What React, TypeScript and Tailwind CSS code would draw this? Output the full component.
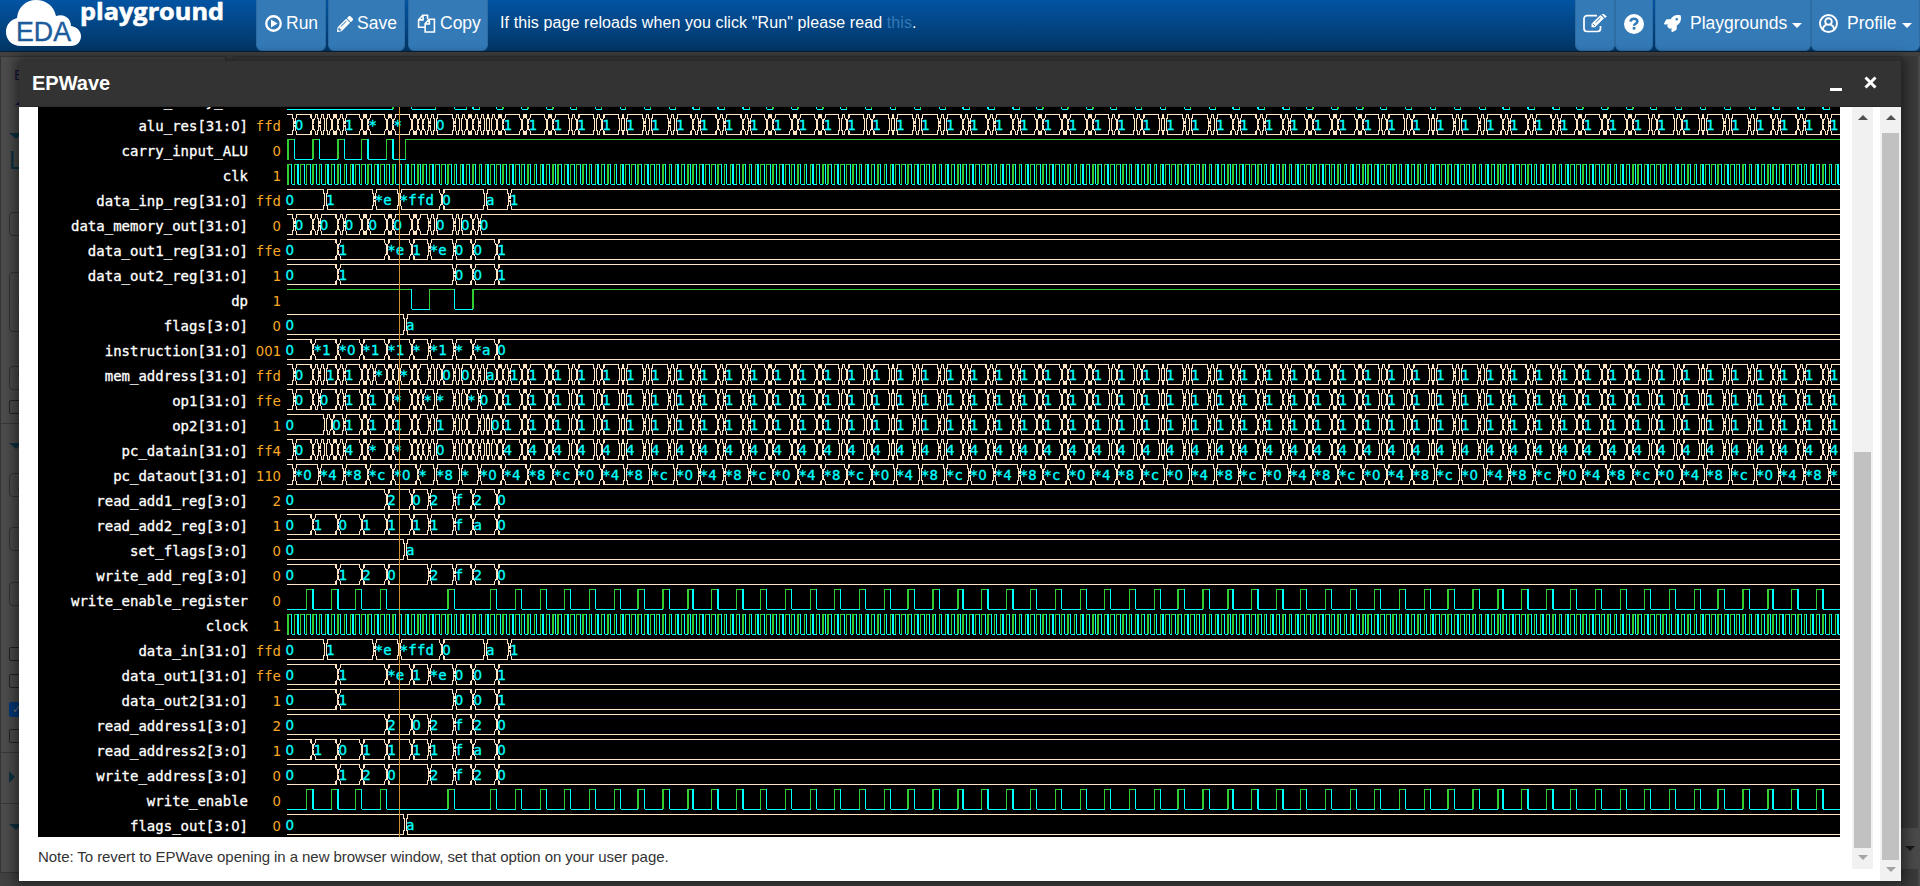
import React from "react";
import { FaPencilAlt, FaRocket } from "react-icons/fa";

type Wave = { name: string; value: string } & (
  | { kind: "bus"; cells: [number, string][] }
  | { kind: "bit"; start: 0 | 1; flips: number[]; edge?: boolean }
);

const STEP = 54 / 11;
const END = 252.9;
const RIGHT = 1840 - 287;
const TOP_Y = 7;

/* Horizontal position of a time step, on the 1.25px raster of the viewer. */
const pos = (k: number) => 0.3 + 1.25 * Math.ceil(k * STEP - 0.001);

const parse = (text: string): [number, string][] =>
  text.split(" ").map((part) => {
    const [k, v] = part.split("=");
    return [Number(k), v ?? ""];
  });

const cycle = (from: number, label: string): [number, string][] => {
  const out: [number, string][] = [];
  for (let k = from; k < END; k += 4) out.push([k, ""], [k + 1, label]);
  return out;
};

const bus = (name: string, value: string, text: string, tail: [number, string][] = []): Wave => ({
  name,
  value,
  kind: "bus",
  cells: [...parse(text), ...tail],
});

const clockFlips: number[] = [];
for (let k = 0.5; k < END + 1; k += 0.5) clockFlips.push(k);

const enableFlips = [3, 4, 7, 8, 11, 12, 15, 16, 26, 27];
for (let k = 33; k < END + 1; k += 4) enableFlips.push(k, k + 1);

const topFlips = [17, 20, 24, 27, 29, 30, 31];
for (let k = 34; k < END; k += 4) topFlips.push(k, k + 1);

const pcTail: [number, string][] = [];
for (let k = 35, i = 1; k < END; k += 4, i++) pcTail.push([k, k > 250 ? "*" : ["*0", "*4", "*8", "*c"][i % 4]]);

const OUT1 = "0=0 8=1 16=*e 20=1 23=*e 27=0 30=0 34=1";
const OUT2 = "0=0 8=1 27=0 30=0 34=1";
const DATA_IN = "0=0 6=1 14=*e 18=*ffd 25=0 32=a 36=1";
const ADDR1 = "0=0 16=2 20=0 23=2 27=f 30=2 34=0";
const ADDR2 = "0=0 4=1 8=0 12=1 16=1 20=1 23=1 27=f 30=a 34=0";
const WADDR = "0=0 8=1 12=2 16=0 23=2 27=f 30=2 34=0";

const waves: Wave[] = [
  { name: "alu_carry_ALU", value: "", kind: "bit", start: 0, flips: topFlips },
  bus("alu_res[31:0]", "ffd", "0 1=0 4 5 6 7 8 9=1 12 13=* 16 17=* 20 21 22 23 24=0 27 28 29 30 31 32 33 34 35=1", cycle(38, "1")),
  { name: "carry_input_ALU", value: "0", kind: "bit", start: 1, edge: true, flips: [1, 4, 5, 8, 9, 12, 13, 16, 17, 19] },
  { name: "clk", value: "1", kind: "bit", start: 1, edge: true, flips: clockFlips },
  bus("data_inp_reg[31:0]", "ffd", DATA_IN),
  bus("data_memory_out[31:0]", "0", "0 1=0 4 5=0 8 9=0 12 13=0 16 17=0 20 21 23 24=0 27 28=0 30 31=0"),
  bus("data_out1_reg[31:0]", "ffe", OUT1),
  bus("data_out2_reg[31:0]", "1", OUT2),
  { name: "dp", value: "1", kind: "bit", start: 1, flips: [20, 23, 27, 30] },
  bus("flags[3:0]", "0", "0=0 19=a"),
  bus("instruction[31:0]", "001", "0=0 4=*1 8=*0 12=*1 16=*1 20=* 23=*1 27=* 30=*a 34=0"),
  bus("mem_address[31:0]", "ffd", "0 1=0 4 5 6=1 8 9=1 12 13 14=* 16 17 18=* 20 21 23 24 25=0 27 28=0 30 31 32=a 34 35 36=1", cycle(38, "1")),
  bus("op1[31:0]", "ffe", "0 1=0 4 5=0 8 9=1 12 13=1 16 17=* 20 21 22=* 24=* 27 28 29=* 31=0 34 35=1", cycle(38, "1")),
  bus("op2[31:0]", "1", "0=0 6 7=0 9=1 12 13=1 16 17=1 20 21 23 24=1 27 28 29 31 32 33=0 35=1", cycle(38, "1")),
  bus("pc_datain[31:0]", "ff4", "0 1=0 4 5 6 7 8 9=4 12 13=* 16 17=* 20 21 22 23 24=0 27 28 29 30 31 32 33 34 35=4", cycle(38, "4")),
  bus("pc_dataout[31:0]", "110", "0 1=*0 5=*4 9=*8 13=*c 17=*0 21=* 24=*8 28=* 31=*0", pcTail),
  bus("read_add1_reg[3:0]", "2", ADDR1),
  bus("read_add2_reg[3:0]", "1", ADDR2),
  bus("set_flags[3:0]", "0", "0=0 19=a"),
  bus("write_add_reg[3:0]", "0", WADDR),
  { name: "write_enable_register", value: "0", kind: "bit", start: 0, flips: enableFlips },
  { name: "clock", value: "1", kind: "bit", start: 1, edge: true, flips: clockFlips },
  bus("data_in[31:0]", "ffd", DATA_IN),
  bus("data_out1[31:0]", "ffe", OUT1),
  bus("data_out2[31:0]", "1", OUT2),
  bus("read_address1[3:0]", "2", ADDR1),
  bus("read_address2[3:0]", "1", ADDR2),
  bus("write_address[3:0]", "0", WADDR),
  { name: "write_enable", value: "0", kind: "bit", start: 0, flips: enableFlips },
  bus("flags_out[3:0]", "0", "0=0 19=a"),
];

/* Monospace text whose zeros are drawn plain, without the inner dot. */
function Mono({ text }: { text: string }) {
  return (
    <>
      {text.split(/(0)/).map((part, i) =>
        part === "0" ? (
          <span key={i} className="inline-block w-[8.43px] font-['DejaVu_Sans'] text-[13.2px] leading-none">0</span>
        ) : (
          part
        ),
      )}
    </>
  );
}

function BitWave({ start, flips, edge, y }: { start: 0 | 1; flips: number[]; edge?: boolean; y: number }) {
  let high = "";
  let low = "";
  let level = start;
  let x = edge ? 0 : -1;
  if (edge) high += `M0 ${y}h2v21h-2z`;
  [...flips, 999].forEach((k) => {
    const nx = k === 999 ? RIGHT : Math.min(pos(k), RIGHT);
    const w = Math.max(nx - x + (k === 999 ? 0 : 1), 0.5);
    if (level) high += `M${x + 1} ${y}h${w - 1}v1h${1 - w}z`;
    else low += `M${x + 1} ${y + 20}h${w - 1}v1h${1 - w}z`;
    if (k !== 999) {
      if (level) low += `M${nx} ${y}h1.25v20h-1.25z`;
      else high += `M${nx} ${y}h1.25v20h-1.25z`;
      level = level ? 0 : 1;
    }
    x = nx;
  });
  return (
    <>
      <path d={high} fill="#32cd32" />
      <path d={low} fill="#00ffff" />
    </>
  );
}

function BusWave({ cells, y }: { cells: [number, string][]; y: number }) {
  const t = y + 0.5;
  const m = y + 10.5;
  const b = y + 20.5;
  let d = "";
  cells.forEach(([k], i) => {
    const next = cells[i + 1];
    const x = pos(k) + 0.7;
    if (k === 0) d += `M0 ${t}`;
    else d += `M${x + 0.7} ${m}L${x + 0.9} ${t + 5}L${x + 2.2} ${t + 3}V${t}`;
    const e = next ? pos(next[0]) + 0.2 : RIGHT;
    if (next) d += `H${e - 1.5}V${t + 3}L${e - 0.2} ${t + 5}V${m}V${b - 5}L${e - 1.5} ${b - 3}V${b}`;
    else d += `H${RIGHT}M${RIGHT} ${b}`;
    if (k === 0) d += "H0";
    else d += `H${x + 2.2}V${b - 3}L${x + 0.9} ${b - 5}L${x + 0.7} ${m}`;
  });
  return <path d={d} fill="none" stroke="#ffe4c4" strokeWidth="1.1" />;
}

function Waves() {
  return (
    <svg width={RIGHT + 2} height="730" viewBox={`-2 0 ${RIGHT + 2} 730`} className="block shrink-0">
      <g shapeRendering="crispEdges">
        {waves.map((w, i) => {
          const y = TOP_Y + (i - 1) * 25;
          return w.kind === "bit" ? (
            <BitWave key={i} start={w.start} flips={w.flips} edge={w.edge} y={y} />
          ) : (
            <BusWave key={i} cells={w.cells} y={y} />
          );
        })}
      </g>
      {waves.map((w, i) =>
        w.kind === "bus"
          ? w.cells
              .filter(([, v]) => v)
              .map(([k, v]) => (
                <text
                  key={`${i}-${k}`}
                  y={TOP_Y + (i - 1) * 25 + 16}
                  fill="#00ffff"
                  stroke="#00ffff"
                  strokeWidth="0.3"
                  className="font-['DejaVu_Sans_Mono'] text-[14px]"
                >
                  {v.split("").map((c, j) => (
                    <tspan key={j} x={(k === 0 ? -1.5 : pos(k) + 1.2) + j * 8.6} className={c === "0" ? "font-['DejaVu_Sans'] text-[13.4px]" : ""}>
                      {c}
                    </tspan>
                  ))}
                </text>
              ))
          : null,
      )}
      <rect x="112" y="0" width="1" height="730" fill="#cd9235" shapeRendering="crispEdges" />
    </svg>
  );
}

function Caret() {
  return <span className="mt-[3px] h-0 w-0 border-x-[5px] border-t-[5px] border-x-transparent border-t-white" />;
}

function NavButton({ className, children }: { className: string; children: React.ReactNode }) {
  return (
    <div className={`flex h-[51px] shrink-0 items-center rounded-b-md border border-t-0 border-[#2e6da4] bg-[#337ab7] pb-[3px] text-[17.5px] text-white ${className}`}>
      {children}
    </div>
  );
}

function Logo() {
  return (
    <svg width="230" height="51" viewBox="0 0 230 51" className="shrink-0">
      <path d="M21 46 C11 46 6 39 6 32 C6 25 10 20 17 18 C18 7 26 0 36 0 C46 0 54 6 56 16 C65 13 71 19 71 26 C77 27 81 31 81 36 C81 42 77 46 71 46 Z" fill="#fff" />
      <text x="16" y="41" fill="#1c5c9c" stroke="#1c5c9c" strokeWidth="0.4" textLength="55" lengthAdjust="spacingAndGlyphs" className="font-['Liberation_Sans'] text-[27px]">EDA</text>
      <text x="80" y="19.5" fill="#fff" stroke="#fff" strokeWidth="0.6" textLength="144" lengthAdjust="spacingAndGlyphs" className="font-['Open_Sans'] text-[23.5px] font-bold">playground</text>
    </svg>
  );
}

function Header() {
  return (
    <header className="flex h-[52px] items-start justify-between border-b border-[#0a1f35] bg-linear-to-b from-[#0254a2] to-[#023666]">
      <div className="flex">
        <Logo />
        <NavButton className="ml-[26px] w-[70px] pl-[8px]">
          <svg width="17" height="17" viewBox="0 0 15 15" className="mr-1 shrink-0">
            <circle cx="7.5" cy="7.5" r="6.4" fill="none" stroke="#fff" strokeWidth="2" />
            <path d="M5.3 3.9v7.2l5.8-3.6z" fill="#fff" />
          </svg>
          Run
        </NavButton>
        <NavButton className="ml-[2px] w-[77px] pl-[8px]">
          <FaPencilAlt className="mr-[4px] shrink-0 text-[16px]" />Save
        </NavButton>
        <NavButton className="ml-[3px] w-[80px] pl-[8px]">
          <svg width="19" height="19" viewBox="0 0 17 18" className="mr-1 shrink-0" fill="none" stroke="#fff" strokeWidth="1.5">
            <path d="M7 12.5H1V5.5L5 1.2H9.5V5M5.2 1.5V5.6H1.3" />
            <path d="M7.2 9.2L11 5H16V17H7.2zM11.2 5.2V9.4H7.5" />
          </svg>
          Copy
        </NavButton>
        <p className="ml-[12px] mt-[11px] whitespace-nowrap text-[16px] leading-6 tracking-[0.1px] text-white">
          If this page reloads when you click "Run" please read <span className="text-[#337ab7]">this</span>.
        </p>
      </div>
      <div className="flex">
        <NavButton className="w-[40px] pl-[7px]">
          <svg width="24" height="19" viewBox="0 0 24 19" fill="none">
            <path d="M14 1.6H4A3 3 0 0 0 1 4.600V14.500A3 3 0 0 0 4 17.500H14.500A3 3 0 0 0 17.500 14.500V12" stroke="#fff" strokeWidth="1.700" />
            <path d="M8.500 9.700L17.500 .9L21 4.300L12 13.200H8.500zM18.500 0L20 -.8L23.800 2.600L22 4z" fill="#fff" />
            <path d="M9.800 9.800L12 12M12.500 8.700L17.500 3.800" stroke="#337ab7" strokeWidth="1" />
          </svg>
        </NavButton>
        <NavButton className="w-[38px] pl-[8px]">
          <svg width="20" height="20" viewBox="0 0 20 20">
            <circle cx="10" cy="10" r="10" fill="#fff" />
            <path d="M6.600 7.700C6.800 5.200 8.200 4.700 10 4.700C12 4.700 13.400 5.700 13.400 7.500C13.400 9.700 10.100 9.600 10.100 11.800" fill="none" stroke="#337ab7" strokeWidth="2.600" />
            <rect x="8.700" y="13" width="2.700" height="2.600" fill="#337ab7" />
          </svg>
        </NavButton>
        <NavButton className="ml-[2px] w-[156px] pl-[8px]">
          <FaRocket className="mr-[9px] shrink-0 text-[17px]" />
          <span className="mr-[5px]">Playgrounds</span>
          <Caret />
        </NavButton>
        <NavButton className="w-[109px] pl-[7px]">
          <svg width="19" height="19" viewBox="0 0 19 19" className="mr-[9px] shrink-0" fill="none" stroke="#fff">
            <circle cx="9.500" cy="9.500" r="8.500" strokeWidth="1.900" />
            <circle cx="9.500" cy="7.500" r="3.300" strokeWidth="1.900" />
            <path d="M4 15.500C4 12.600 5.500 11.300 7.200 10.800M15 15.500C15 12.600 13.500 11.300 11.800 10.800" strokeWidth="1.900" />
          </svg>
          <span className="mr-[5px]">Profile</span>
          <Caret />
        </NavButton>
      </div>
    </header>
  );
}

const field = "ml-2 w-[60px] rounded border border-[#333] pl-[8px] text-[16px] text-[#191919]";
const box = "ml-2 h-[14px] w-[14px] rounded-[2px] border border-[#222]";
const down = "ml-[8px] h-0 w-0 border-x-[7px] border-t-[6px] border-x-transparent border-t-[#0e3042]";
const rule = "h-px w-[200px] bg-[#383838]";

function Sidebar() {
  return (
    <aside className="h-[817px] w-[226px] overflow-hidden border border-[#353535] bg-[#4c4c4c] leading-none">
      <div className="mt-[10px] h-[20px] pl-[13px] text-[15px] text-[#14143c]">E</div>
      <div className="ml-[14px] mt-[12px] h-0 w-0 border-x-[7px] border-b-[6px] border-x-transparent border-b-[#14143c]" />
      <div className={`mt-[28px] ${down}`} />
      <div className="mt-[9px] h-[26px] pl-[8px] text-[25px] text-[#0e3042]">L</div>
      <div className={`mt-[38px] h-[24px] pt-[3px] ${field}`}>Y</div>
      <div className={`mt-[36px] h-[60px] pt-[3px] leading-[18px] ${field} pl-[6px]`}>N<br />C<br />C</div>
      <div className={`mt-[34px] h-[24px] pt-[3px] ${field} pl-[3px]`}>te</div>
      <div className={`mt-[10px] ${box}`} />
      <div className={`mt-[9px] ${rule}`} />
      <div className={`mt-[19px] ${down}`} />
      <div className={`mt-[24px] h-[24px] pt-[3px] ${field}`}>A</div>
      <div className={`mt-[30px] h-[24px] pt-[3px] ${field} pl-[3px]`}>-2</div>
      <div className={`mt-[31px] h-[24px] pt-[3px] ${field} pl-[3px]`}>F</div>
      <div className={`mt-[41px] ${box}`} />
      <div className={`mt-[13px] ${box}`} />
      <div className="ml-2 mt-[14px] flex h-[15px] w-[15px] items-center justify-center rounded-[2px] bg-[#023a7a] text-[11px] text-[#777]">✓</div>
      <div className={`mt-[12px] ${box}`} />
      <div className={`mt-[9px] ${rule}`} />
      <div className="ml-[8px] mt-[18px] h-0 w-0 border-y-[6px] border-l-[6px] border-y-transparent border-l-[#0e3042]" />
      <div className={`mt-[20px] ${rule}`} />
      <div className={`mt-[20px] ${down}`} />
    </aside>
  );
}

function Scrollbar({ height, gap, thumb }: { height: string; gap: string; thumb: string }) {
  return (
    <div className={`flex w-[21px] shrink-0 flex-col items-center bg-[#f1f1f1] ${height}`}>
      <span className="mt-[8px] h-0 w-0 shrink-0 border-x-[5px] border-b-[5px] border-x-transparent border-b-[#505050]" />
      <div className={`w-[17px] shrink-0 bg-[#c1c1c1] ${gap} ${thumb}`} />
      <span className="mt-[7px] h-0 w-0 shrink-0 border-x-[5px] border-t-[5px] border-x-transparent border-t-[#a3a3a3]" />
    </div>
  );
}

function EPWaveDialog() {
  return (
    <section className="absolute left-[19px] top-[61px] flex h-[820px] w-[1882px] flex-col bg-white shadow-[0_0_12px_4px_rgba(0,0,0,0.5)]">
      <header className="flex h-[46px] shrink-0 items-center border-b border-[#292929] bg-[#333] pb-[2px] pl-[13px] text-white">
        <h1 className="text-[20px] font-bold">EPWave</h1>
        <span className="ml-auto mt-[13px] h-[3px] w-[12px] bg-white" />
        <svg width="13" height="13" viewBox="0 0 13 13" className="ml-[22px] mr-[24px]">
          <path d="M1.500 1.500L11.500 11.500M11.500 1.500L1.500 11.500" stroke="#fff" strokeWidth="3" />
        </svg>
      </header>
      <div className="flex min-h-0 grow">
        <div className="flex w-[1833px] flex-col pl-[19px]">
          <div className="flex h-[730px] w-[1802px] overflow-hidden bg-black font-['DejaVu_Sans_Mono'] text-[14px]">
            <div className="-mt-[19px] flex w-[210px] shrink-0 flex-col items-end text-white [-webkit-text-stroke:0.3px_#fff]">
              {waves.map((w) => (
                <div key={w.name} className="h-[25px] shrink-0 whitespace-pre leading-[27px]"><Mono text={w.name} /></div>
              ))}
            </div>
            <div className="-mt-[19px] flex w-[33px] shrink-0 flex-col items-end text-[#f9a825]">
              {waves.map((w) => (
                <div key={w.name} className="h-[25px] shrink-0 whitespace-pre leading-[27px]"><Mono text={w.value} /></div>
              ))}
            </div>
            <div className="ml-[4px]"><Waves /></div>
          </div>
          <p className="mt-[10px] text-[15px] leading-5 tracking-[-0.07px] text-[#333]">
            Note: To revert to EPWave opening in a new browser window, set that option on your user page.
          </p>
        </div>
        <Scrollbar height="h-[762px]" gap="mt-[332px]" thumb="h-[396px]" />
        <div className="ml-[7px] flex"><Scrollbar height="h-[774px]" gap="mt-[13px]" thumb="h-[727px]" /></div>
      </div>
    </section>
  );
}

export default function App() {
  return (
    <div className="relative h-[886px] w-full overflow-hidden bg-[#424242] font-['Liberation_Sans',sans-serif]">
      <Header />
      <div className="flex h-[834px] pt-[4px]">
        <Sidebar />
        <div className="ml-[7px] h-[817px] grow border border-[#353535] bg-[#404040]" />
        <div className="flex h-[830px] w-[19px] flex-col border-r-2 border-[#4a4a4a] bg-[#3a3a3a]">
          <div className="mt-[772px] flex h-[41px] items-center justify-center bg-[#4a4a4a]">
            <span className="h-0 w-0 border-x-[5px] border-t-[5px] border-x-transparent border-t-[#181818]" />
          </div>
        </div>
      </div>
      <EPWaveDialog />
    </div>
  );
}
